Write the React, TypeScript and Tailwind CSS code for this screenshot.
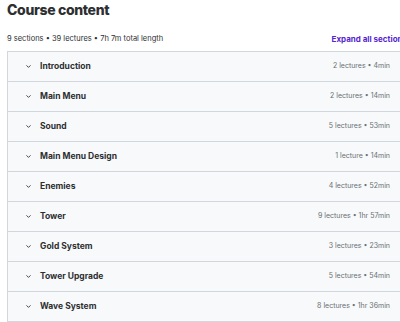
import { ChevronDown } from "lucide-react";

const sections = [
  { title: "Introduction", meta: "2 lectures • 4min" },
  { title: "Main Menu", meta: "2 lectures • 14min" },
  { title: "Sound", meta: "5 lectures • 53min" },
  { title: "Main Menu Design", meta: "1 lecture • 14min" },
  { title: "Enemies", meta: "4 lectures • 52min" },
  { title: "Tower", meta: "9 lectures • 1hr 57min" },
  { title: "Gold System", meta: "3 lectures • 23min" },
  { title: "Tower Upgrade", meta: "5 lectures • 54min" },
  { title: "Wave System", meta: "8 lectures • 1hr 36min" },
];

export default function App() {
  return (
    <div className="w-[400px] h-[322px] overflow-hidden bg-white text-[#2d2f31] font-['Inter',sans-serif]">
      <h2 className="pl-[7px] text-[14px] leading-[20px] font-extrabold tracking-tight">
        Course content
      </h2>
      <div className="flex items-center justify-between pl-[7px] mt-[14px] h-[10px]">
        <span className="text-[7.5px] text-[#2d2f31] whitespace-nowrap">
          9 sections • 39 lectures • 7h 7m total length
        </span>
        <span className="text-[8px] font-bold text-[#5624d0] whitespace-nowrap pl-2 -mr-[7px]">
          Expand all sections
        </span>
      </div>
      <div className="ml-[7px] mt-[7px] border border-r-0 border-[#d1d7dc]">
        {sections.map((s, i) => (
          <div
            key={s.title}
            className={`flex items-center bg-[#f7f9fa] pl-[17px] pr-[10px] ${
              i > 0 ? "h-[30px] border-t border-[#d1d7dc]" : "h-[29px]"
            }`}
          >
            <ChevronDown className="w-[7px] h-[7px] text-[#2d2f31]" strokeWidth={3} />
            <span className="ml-[8px] text-[8.5px] font-bold whitespace-nowrap">{s.title}</span>
            <span className="ml-auto text-[7px] text-[#6a6f73] whitespace-nowrap">{s.meta}</span>
          </div>
        ))}
      </div>
    </div>
  );
}
